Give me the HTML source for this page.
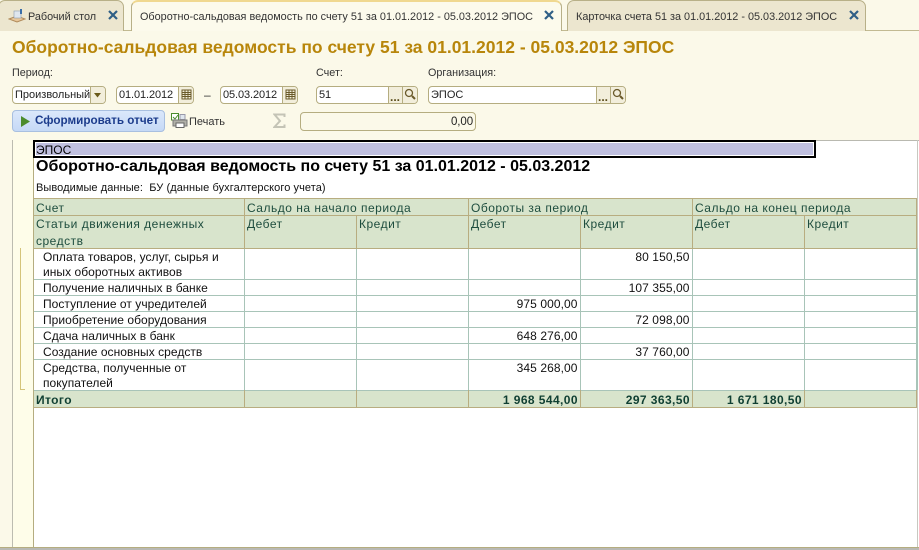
<!DOCTYPE html>
<html><head><meta charset="utf-8"><style>
html,body{margin:0;padding:0;width:919px;height:550px;overflow:hidden;background:#fbf9e9;font-family:"Liberation Sans",sans-serif;color:#222}
div,span,svg{position:absolute;box-sizing:border-box}
.t{white-space:nowrap;line-height:14px}
.f{font-size:11px;color:#333}
.d{font-size:11px;letter-spacing:-.1px;color:#222}
.l{font-size:10.800px;color:#333}
.tt{font-size:10.850px;color:#333}
.g{font-size:12px;letter-spacing:.5px;color:#1e4d3e}
.b{font-size:12px;letter-spacing:.04px;color:#111}
.r{text-align:right;width:107.500px;font-size:12px;letter-spacing:.08px;color:#111}
.bt{font-weight:bold;color:#0f3f32;letter-spacing:.42px}
.tab{top:0;height:31px;border:1px solid #b8b088;border-bottom:none;border-radius:7px 7px 0 0;background:#ece6cf}
.inp{background:#fff;border:1px solid #b5ad80;border-radius:4px;height:18px;top:86px}
.ln{background:#b5ad80}
.v{background:#a8c4b8;width:1px}
.h{background:#a8c4b8;height:1px;left:34px;width:883px}
.hv{background:#b8ad80;width:1px}
.hh{background:#b8ad80;height:1px;left:33px;width:884px}
</style></head><body>
<!-- tabs -->
<div style="left:0;top:0;width:919px;height:31px;background:#fbf9e9"></div>
<div style="left:0;top:30px;width:919px;height:1px;background:#c2ba92"></div>
<div class="tab" style="left:-2px;width:126px"></div>
<div class="tab" style="left:131px;width:431px;height:31px;background:#fcfaec;border-top:2px solid #f0d890"></div>
<div class="tab" style="left:567px;width:299px"></div>
<svg style="left:8px;top:7px" width="18" height="17" viewBox="0 0 18 17"><path d="M1 12 L9 9 L17 12 L9 15Z" fill="#e8c79a" stroke="#b08a5a"/><rect x="6" y="4" width="7" height="7" fill="#dfe6ee" stroke="#8a9bb0" stroke-width=".6"/><path d="M13 2v5" stroke="#3a6ea8" stroke-width="2"/></svg>
<div class="t tt" style="left:28px;top:10px">Рабочий стол</div>
<svg style="left:108px;top:10px" width="10" height="10"><path d="M1 1L9 9M9 1L1 9" stroke="#2f5f86" stroke-width="2.200"/></svg>
<div class="t tt" style="left:140px;top:10px;width:400px">Оборотно-сальдовая ведомость по счету 51 за 01.01.2012 - 05.03.2012 ЭПОС</div>
<svg style="left:544px;top:10px" width="10" height="10"><path d="M1 1L9 9M9 1L1 9" stroke="#2f5f86" stroke-width="2.200"/></svg>
<div class="t tt" style="left:576px;top:10px">Карточка счета 51 за 01.01.2012 - 05.03.2012 ЭПОС</div>
<svg style="left:849px;top:10px" width="10" height="10"><path d="M1 1L9 9M9 1L1 9" stroke="#2f5f86" stroke-width="2.200"/></svg>
<!-- title -->
<div class="t" style="left:12px;top:37px;font-size:17.500px;line-height:20px;font-weight:bold;color:#b8860b">Оборотно-сальдовая ведомость по счету 51 за 01.01.2012 - 05.03.2012 ЭПОС</div>
<!-- labels -->
<div class="t l" style="left:12px;top:66px">Период:</div>
<div class="t l" style="left:316px;top:66px">Счет:</div>
<div class="t l" style="left:428px;top:66px">Организация:</div>
<!-- period select -->
<div class="inp" style="left:12px;width:94px"></div>
<div class="t f" style="left:15px;top:88px;width:75px;overflow:hidden;color:#222">Произвольный</div>
<div class="ln" style="left:90px;top:87px;width:1px;height:16px"></div>
<div style="left:91px;top:87px;width:14px;height:16px;background:#f2eedb;border-radius:0 3px 3px 0"></div>
<svg style="left:93px;top:93px" width="9" height="5"><path d="M1 0H8L4.500 4.500Z" fill="#6a5a1a"/></svg>
<!-- date 1 -->
<div class="inp" style="left:116px;width:78px"></div>
<div class="t d" style="left:119px;top:88px">01.01.2012</div>
<div class="ln" style="left:178px;top:87px;width:1px;height:16px"></div>
<div style="left:179px;top:87px;width:14px;height:16px;background:#f2eedb;border-radius:0 3px 3px 0"></div>
<svg style="left:181px;top:89px" width="11" height="11"><path d="M1 1H10V10H1ZM1 3.500H10M1 5.500H10M1 7.500H10M4 1V10M7 1V10" fill="none" stroke="#6a5a2a"/></svg>
<div class="t f" style="left:204px;top:88px;font-size:12px">–</div>
<!-- date 2 -->
<div class="inp" style="left:220px;width:78px"></div>
<div class="t d" style="left:223px;top:88px">05.03.2012</div>
<div class="ln" style="left:282px;top:87px;width:1px;height:16px"></div>
<div style="left:283px;top:87px;width:14px;height:16px;background:#f2eedb;border-radius:0 3px 3px 0"></div>
<svg style="left:285px;top:89px" width="11" height="11"><path d="M1 1H10V10H1ZM1 3.500H10M1 5.500H10M1 7.500H10M4 1V10M7 1V10" fill="none" stroke="#6a5a2a"/></svg>
<!-- account -->
<div class="inp" style="left:316px;width:102px"></div>
<div class="t d" style="left:319px;top:88px">51</div>
<div style="left:388px;top:87px;width:29px;height:16px;background:#f2eedb;border-radius:0 3px 3px 0;border-left:1px solid #b5ad80"></div>
<div class="ln" style="left:402px;top:87px;width:1px;height:16px"></div>
<div class="t" style="left:390px;top:90px;font-size:12px;font-weight:bold;color:#5a4c1a">...</div>
<svg style="left:404px;top:88px" width="12" height="12"><circle cx="5" cy="5" r="3.500" fill="none" stroke="#6a5a2a" stroke-width="1.300"/><path d="M8 8L11 11" stroke="#6a5a2a" stroke-width="2"/></svg>
<!-- org -->
<div class="inp" style="left:428px;width:198px"></div>
<div class="t f" style="left:431px;top:88px;color:#222">ЭПОС</div>
<div style="left:596px;top:87px;width:29px;height:16px;background:#f2eedb;border-radius:0 3px 3px 0;border-left:1px solid #b5ad80"></div>
<div class="ln" style="left:610px;top:87px;width:1px;height:16px"></div>
<div class="t" style="left:598px;top:90px;font-size:12px;font-weight:bold;color:#5a4c1a">...</div>
<svg style="left:612px;top:88px" width="12" height="12"><circle cx="5" cy="5" r="3.500" fill="none" stroke="#6a5a2a" stroke-width="1.300"/><path d="M8 8L11 11" stroke="#6a5a2a" stroke-width="2"/></svg>
<!-- button -->
<div style="left:12px;top:110px;width:153px;height:22px;border:1px solid #a8bfe0;border-radius:4px;background:linear-gradient(#dbe8fb,#c5d9f6)"></div>
<svg style="left:21px;top:116px" width="9" height="11"><path d="M0 0L9 5.500L0 11Z" fill="#4c8c2c"/></svg>
<div class="t" style="left:35px;top:114px;font-size:11.700px;font-weight:bold;color:#1c3c8c">Сформировать отчет</div>
<svg style="left:171px;top:113px" width="17" height="15"><rect x=".5" y=".5" width="7" height="6.500" fill="#fff" stroke="#4c8c2c"/><path d="M2 4L4 6L7 2" fill="none" stroke="#4c8c2c"/><rect x="9" y="1.500" width="5" height="5" fill="#dfe6ee" stroke="#99a"/><rect x="2" y="7" width="14" height="6" fill="#b0b0a8" stroke="#777"/><rect x="5" y="10" width="8" height="4.500" fill="#fff" stroke="#666"/></svg>
<div class="t f" style="left:189px;top:115px">Печать</div>
<svg style="left:273px;top:113px" width="13" height="16"><path d="M11.500 4V1.500H1.500L7 8L1.500 14H11.500V11.500" fill="none" stroke="#c4c4b6" stroke-width="2"/></svg>
<div class="inp" style="left:300px;top:112px;width:176px;height:19px;background:#fbf9e9"></div>
<div class="t d" style="left:300px;top:115px;width:173px;text-align:right;font-size:11.500px">0,00</div>
<!-- report frame -->
<div style="left:12px;top:140px;width:907px;height:410px;background:#fff;border-top:1px solid #b9b9b0"></div>
<div style="left:12px;top:140px;width:21px;height:407px;background:#fefde9;border-left:1px solid #bcbcb0"></div>
<div style="left:33px;top:141px;width:1px;height:406px;background:#b5ad80"></div>
<div style="left:917px;top:140px;width:1px;height:407px;background:#c8c8c0"></div>
<div style="left:0;top:547px;width:919px;height:1px;background:#b5ad80"></div>
<div style="left:0;top:548px;width:919px;height:2px;background:#b9b9b4"></div>
<!-- group bracket -->
<div style="left:20px;top:248px;width:5px;height:142px;border-left:1px solid #d4c47a;border-bottom:1px solid #d4c47a"></div>
<!-- epos -->
<div style="left:33px;top:140px;width:783px;height:18px;background:#c0c0e0;border:2px solid #000;box-shadow:inset 0 0 0 1px #fff"></div>
<div class="t" style="left:36px;top:143px;font-size:12px;color:#000">ЭПОС</div>
<div class="t" style="left:36px;top:157px;font-size:16px;line-height:20px;font-weight:bold;color:#000">Оборотно-сальдовая ведомость по счету 51 за 01.01.2012 - 05.03.2012</div>
<div class="t" style="left:36px;top:181px;font-size:11px;letter-spacing:.07px;color:#111">Выводимые данные:&nbsp; БУ (данные бухгалтерского учета)</div>
<!-- table header bg -->
<div style="left:34px;top:198px;width:883px;height:50px;background:#d8e4cc"></div>
<div style="left:34px;top:390px;width:883px;height:17px;background:#d8e4cc"></div>
<!-- body grid -->
<div class="h" style="top:279px"></div><div class="h" style="top:295px"></div><div class="h" style="top:311px"></div><div class="h" style="top:327px"></div><div class="h" style="top:343px"></div><div class="h" style="top:359px"></div><div class="h" style="top:390px"></div>
<div class="v" style="left:244px;top:248px;height:142px"></div><div class="v" style="left:356px;top:248px;height:142px"></div><div class="v" style="left:468px;top:248px;height:142px"></div><div class="v" style="left:580px;top:248px;height:142px"></div><div class="v" style="left:692px;top:248px;height:142px"></div><div class="v" style="left:804px;top:248px;height:142px"></div>
<div class="v" style="left:916px;top:248px;height:142px;width:2px"></div>
<!-- header grid -->
<div class="hh" style="top:198px"></div><div class="hh" style="top:215px"></div><div class="hh" style="top:248px"></div><div class="hh" style="top:407px"></div>
<div class="hv" style="left:244px;top:198px;height:50px"></div>
<div class="hv" style="left:356px;top:215px;height:33px"></div>
<div class="hv" style="left:468px;top:198px;height:50px"></div>
<div class="hv" style="left:580px;top:215px;height:33px"></div>
<div class="hv" style="left:692px;top:198px;height:50px"></div>
<div class="hv" style="left:804px;top:215px;height:33px"></div>
<div class="hv" style="left:916px;top:198px;height:50px"></div>
<div class="hv" style="left:244px;top:390px;height:17px"></div><div class="hv" style="left:356px;top:390px;height:17px"></div><div class="hv" style="left:468px;top:390px;height:17px"></div><div class="hv" style="left:580px;top:390px;height:17px"></div><div class="hv" style="left:692px;top:390px;height:17px"></div><div class="hv" style="left:804px;top:390px;height:17px"></div><div class="hv" style="left:916px;top:390px;height:17px"></div>
<!-- header text -->
<div class="t g" style="left:36px;top:201px">Счет</div>
<div class="t g" style="left:247px;top:201px">Сальдо на начало периода</div>
<div class="t g" style="left:471px;top:201px">Обороты за период</div>
<div class="t g" style="left:695px;top:201px">Сальдо на конец периода</div>
<div class="t g" style="left:36px;top:217px">Статьи движения денежных</div>
<div class="t g" style="left:36px;top:234px">средств</div>
<div class="t g" style="left:247px;top:217px">Дебет</div><div class="t g" style="left:359px;top:217px">Кредит</div>
<div class="t g" style="left:471px;top:217px">Дебет</div><div class="t g" style="left:583px;top:217px">Кредит</div>
<div class="t g" style="left:695px;top:217px">Дебет</div><div class="t g" style="left:807px;top:217px">Кредит</div>
<!-- body text -->
<div class="t b" style="left:43px;top:250px">Оплата товаров, услуг, сырья и</div>
<div class="t b" style="left:43px;top:265px">иных оборотных активов</div>
<div class="t b" style="left:43px;top:281px">Получение наличных в банке</div>
<div class="t b" style="left:43px;top:297px">Поступление от учредителей</div>
<div class="t b" style="left:43px;top:313px">Приобретение оборудования</div>
<div class="t b" style="left:43px;top:329px">Сдача наличных в банк</div>
<div class="t b" style="left:43px;top:345px">Создание основных средств</div>
<div class="t b" style="left:43px;top:361px">Средства, полученные от</div>
<div class="t b" style="left:43px;top:376px">покупателей</div>
<div class="t r" style="left:582px;top:250px">80 150,50</div>
<div class="t r" style="left:582px;top:281px">107 355,00</div>
<div class="t r" style="left:470px;top:297px">975 000,00</div>
<div class="t r" style="left:582px;top:313px">72 098,00</div>
<div class="t r" style="left:470px;top:329px">648 276,00</div>
<div class="t r" style="left:582px;top:345px">37 760,00</div>
<div class="t r" style="left:470px;top:361px">345 268,00</div>
<div class="t bt" style="left:36px;top:393px;font-size:12px">Итого</div>
<div class="t r bt" style="left:470px;top:393px;width:108px">1 968 544,00</div>
<div class="t r bt" style="left:582px;top:393px;width:108px">297 363,50</div>
<div class="t r bt" style="left:694px;top:393px;width:108px">1 671 180,50</div>
</body></html>
